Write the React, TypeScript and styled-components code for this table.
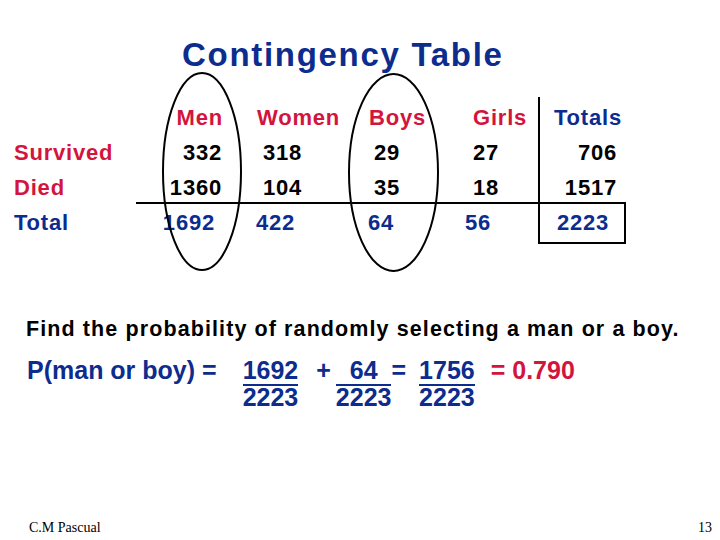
import React from "react";
import styled, { createGlobalStyle } from "styled-components";

const NAVY = "#0c2c8e";
const RED = "#d3143c";

const Global = createGlobalStyle`
  html, body { margin: 0; padding: 0; background: #ffffff; }
  body { width: 720px; height: 540px; overflow: hidden; }
`;

const Slide = styled.div`
  position: relative;
  width: 720px;
  height: 540px;
  display: flex;
  flex-direction: column;
  font-family: "Liberation Sans", Arial, sans-serif;
  font-weight: bold;
  background: #ffffff;
`;

const Title = styled.h1`
  margin: 0;
  padding: 35px 0 0 182px;
  font-size: 33px;
  line-height: 40px;
  letter-spacing: 1.7px;
  color: ${NAVY};
  font-weight: bold;
`;

const Table = styled.div`
  margin-top: 22px;
  display: grid;
  grid-template-columns: 136px 109px 105px 105px 83px 88px;
  grid-template-rows: 38px 35px 32px 42px;
  font-size: 22px;
  letter-spacing: 0.8px;
  white-space: nowrap;
`;

const Row = styled.div<{ $lh: number; $color: string }>`
  display: contents;
  line-height: ${(p) => p.$lh}px;
  color: ${(p) => p.$color};
`;

const Cell = styled.div<{
  $align?: "left" | "right";
  $pl?: number;
  $pr?: number;
  $pt?: number;
  $color?: string;
  $rule?: boolean;
  $side?: boolean;
  $box?: boolean;
}>`
  box-sizing: border-box;
  text-align: ${(p) => p.$align ?? "left"};
  padding-left: ${(p) => p.$pl ?? 0}px;
  padding-right: ${(p) => p.$pr ?? 0}px;
  padding-top: ${(p) => p.$pt ?? 0}px;
  ${(p) => (p.$color ? `color: ${p.$color};` : "")}
  ${(p) => (p.$rule ? "border-top: 2px solid #000;" : "")}
  ${(p) => (p.$side ? "border-left: 2px solid #000;" : "")}
  ${(p) => (p.$box ? "border-right: 2px solid #000; border-bottom: 2px solid #000;" : "")}
`;

const Question = styled.p`
  margin: 72px 0 0 0;
  padding-left: 26px;
  font-size: 21.5px;
  line-height: 26px;
  letter-spacing: 1.1px;
  color: #000000;
  white-space: nowrap;
`;

const Equation = styled.div`
  margin-top: 15px;
  padding-left: 27px;
  display: flex;
  align-items: flex-start;
  font-size: 25px;
  line-height: 27px;
  color: ${NAVY};
  white-space: pre;
`;

const Term = styled.span<{ $ml?: number; $color?: string }>`
  margin-left: ${(p) => p.$ml ?? 0}px;
  ${(p) => (p.$color ? `color: ${p.$color};` : "")}
`;

const Fraction = styled.span<{ $ml?: number }>`
  display: inline-flex;
  flex-direction: column;
  align-items: stretch;
  margin-left: ${(p) => p.$ml ?? 0}px;
`;

const Numerator = styled.span`
  display: block;
  text-align: center;
  border-bottom: 2px solid ${NAVY};
`;

const Denominator = styled.span`
  display: block;
  text-align: center;
  line-height: 22px;
`;

const Footer = styled.div`
  margin-top: auto;
  padding: 0 8px 4px 29px;
  display: flex;
  justify-content: space-between;
  font-family: "Liberation Serif", "Times New Roman", serif;
  font-weight: normal;
  font-size: 14px;
  line-height: 16px;
  color: #000000;
`;

const Overlay = styled.svg`
  position: absolute;
  left: 0;
  top: 0;
  pointer-events: none;
`;

const Frac = ({ num, den, ml }: { num: string; den: string; ml: number }) => (
  <Fraction $ml={ml}>
    <Numerator>{num}</Numerator>
    <Denominator>{den}</Denominator>
  </Fraction>
);

export default function App() {
  return (
    <>
      <Global />
      <Slide>
        <Title>Contingency Table</Title>
        <Table>
          <Row $lh={34} $color={RED}>
            <Cell $pt={4} />
            <Cell $pt={4} $align="right" $pr={22}>Men</Cell>
            <Cell $pt={4} $pl={12}>Women</Cell>
            <Cell $pt={4} $pl={19}>Boys</Cell>
            <Cell $pt={4} $pl={18}>Girls</Cell>
            <Cell $pt={4} $pl={14} $side $color={NAVY}>Totals</Cell>
          </Row>
          <Row $lh={35} $color="#000">
            <Cell $pl={14} $color={RED}>Survived</Cell>
            <Cell $align="right" $pr={23}>332</Cell>
            <Cell $pl={18}>318</Cell>
            <Cell $pl={24}>29</Cell>
            <Cell $pl={18}>27</Cell>
            <Cell $align="right" $pr={9} $side>706</Cell>
          </Row>
          <Row $lh={35} $color="#000">
            <Cell $pl={14} $color={RED}>Died</Cell>
            <Cell $align="right" $pr={23}>1360</Cell>
            <Cell $pl={18}>104</Cell>
            <Cell $pl={24}>35</Cell>
            <Cell $pl={18}>18</Cell>
            <Cell $align="right" $pr={9} $side>1517</Cell>
          </Row>
          <Row $lh={38} $color={NAVY}>
            <Cell $pl={14} $pt={2}>Total</Cell>
            <Cell $align="right" $pr={30} $rule>1692</Cell>
            <Cell $pl={11} $rule>422</Cell>
            <Cell $pl={18} $rule>64</Cell>
            <Cell $pl={10} $rule>56</Cell>
            <Cell $pl={17} $rule $side $box>2223</Cell>
          </Row>
        </Table>
        <Question>Find the probability of randomly selecting a man or a boy.</Question>
        <Equation>
          <Term>P(man or boy) =</Term>
          <Frac ml={26} num="1692" den="2223" />
          <Term $ml={18}>+</Term>
          <Frac ml={5} num="64" den="2223" />
          <Term $ml={0}>=</Term>
          <Frac ml={13} num="1756" den="2223" />
          <Term $ml={16} $color={RED}>= 0.790</Term>
        </Equation>
        <Footer>
          <span>C.M Pascual</span>
          <span>13</span>
        </Footer>
        <Overlay width={720} height={540} viewBox="0 0 720 540">
          <ellipse cx={202} cy={171.5} rx={39} ry={98.5} fill="none" stroke="#000" strokeWidth={2} />
          <ellipse cx={393.5} cy={172.5} rx={44.5} ry={98.5} fill="none" stroke="#000" strokeWidth={2} />
        </Overlay>
      </Slide>
    </>
  );
}
